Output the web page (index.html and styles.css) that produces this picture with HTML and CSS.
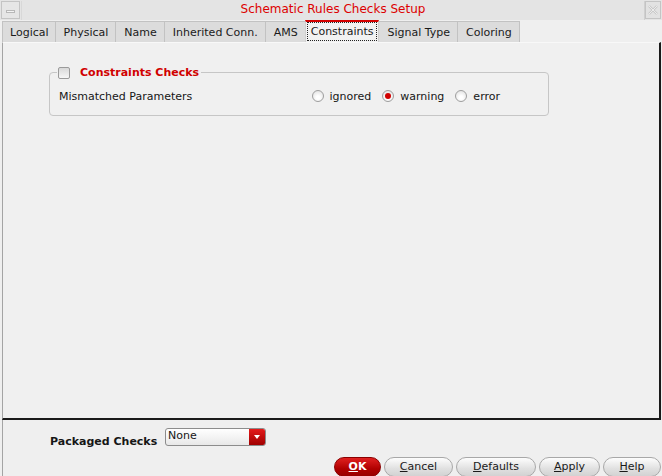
FILE: index.html
```html
<!DOCTYPE html>
<html>
<head>
<meta charset="utf-8">
<link rel="stylesheet" href="styles.css">
</head>
<body>
<div class="window">
  <div class="titlebar">
    <div class="tb-btn"><span class="dash"></span></div>
    <div class="title">Schematic Rules Checks Setup</div>
    <div class="tb-btn close">
      <svg width="12" height="12" viewBox="0 0 12 12"><path d="M2 2 L10 10 M10 2 L2 10" stroke="#c8c8c8" stroke-width="2.4" fill="none"/><path d="M2 2 L10 10 M10 2 L2 10" stroke="#f4f4f4" stroke-width="0.8" fill="none"/></svg>
    </div>
  </div>
  <div class="tabs">
    <div class="tab first">Logical</div>
    <div class="tab">Physical</div>
    <div class="tab">Name</div>
    <div class="tab">Inherited Conn.</div>
    <div class="tab">AMS</div>
    <div class="tab active"><span class="focus">Constraints</span></div>
    <div class="tab">Signal Type</div>
    <div class="tab">Coloring</div>
  </div>
  <div class="panel">
    <fieldset class="group">
      <legend class="legend"><span class="checkbox"></span><span class="legend-text">Constraints Checks</span></legend>
      <div class="row">
        <span class="label">Mismatched Parameters</span>
        <div class="radios">
          <span class="radio-item"><span class="radio"></span>ignored</span>
          <span class="radio-item"><span class="radio on"></span>warning</span>
          <span class="radio-item"><span class="radio"></span>error</span>
        </div>
      </div>
    </fieldset>
  </div>
  <div class="footer">
    <div class="packaged">
      <span class="pk-label">Packaged Checks</span>
      <div class="combo"><span class="combo-text">None</span><span class="combo-arrow"></span></div>
    </div>
    <div class="buttons">
      <button class="btn ok"><u>O</u>K</button>
      <button class="btn cancel"><u>C</u>ancel</button>
      <button class="btn defaults"><u>D</u>efaults</button>
      <button class="btn apply"><u>A</u>pply</button>
      <button class="btn help"><u>H</u>elp</button>
    </div>
  </div>
</div>
</body>
</html>
```

FILE: styles.css
```css
* { box-sizing: border-box; }
html, body {
  margin: 0;
  padding: 0;
  background: #efefef;
}
body {
  font-family: "DejaVu Sans", sans-serif;
  font-size: 11px;
  color: #161616;
}
.window {
  width: 662px;
  height: 476px;
  display: flex;
  flex-direction: column;
  background: #efefef;
}
.titlebar {
  height: 20px;
  display: flex;
  align-items: stretch;
  background: #e4e4e4;
  padding-top: 1px;
}
.tb-btn {
  width: 19px;
  height: 18px;
  border: 1px solid #c4c4c4;
  background: #e6e6e6;
  display: flex;
  align-items: center;
  justify-content: center;
  margin-left: 1px;
}
.tb-btn.close { margin-left: 0; margin-right: 1px; width: 16px; background: #e2e2e2; }
.dash {
  width: 9px;
  height: 3px;
  border: 1px solid #b8b8b8;
  background: #f4f4f4;
  margin-top: 2px;
}
.title {
  flex: 1;
  text-align: center;
  color: #dd0000;
  font-size: 12px;
  line-height: 17px;
  border-left: 1px solid #d8d8d8;
  border-right: 1px solid #d0d0d0;
  margin-left: 1px;
}
.tabs {
  display: flex;
  height: 22px;
  padding-left: 2px;
  align-items: flex-end;
  background: #efefef;
}
.tab {
  height: 21px;
  padding: 0 7px 0 8px;
  font-size: 11px;
  line-height: 21px;
  background: #dcdcdc;
  border: 1px solid #c2c2c2;
  border-bottom: none;
  margin-right: -1px;
  color: #1a1a1a;
}
.tab.first { padding: 0 6px 0 7px; }
.tab.active {
  height: 22px;
  background: #f2f2f2;
  border-top: 2px solid #d40000;
  padding: 0 1px;
  line-height: 19px;
  position: relative;
  z-index: 1;
  border-left: 1px solid #d0d0d0;
  border-right: 1px solid #d0d0d0;
}
.focus {
  display: inline-block;
  border: 1px dotted #222;
  padding: 0 3px;
  line-height: 17px;
}
.panel {
  flex: 1;
  border-left: 1px solid #a4a4a4;
  border-right: 2px solid #1a1a1a;
  border-bottom: 2px solid #1a1a1a;
  border-top: 1px solid #f8f8f8;
  margin-left: 2px;
  margin-right: 1px;
  padding: 23px 110px 0 46px;
  background: #f0f0f0;
}
.group {
  margin: 0;
  border: 1px solid #c6c6c6;
  border-radius: 4px;
  padding: 8px 10px 8px 7px;
  height: 50px;
}
.legend {
  padding: 0 2px 0 1px;
  margin-left: 0;
  display: flex;
  align-items: center;
  gap: 10px;
}
.checkbox {
  width: 12px;
  height: 12px;
  border: 1px solid #9a9a9a;
  border-radius: 2px;
  background: linear-gradient(#d8d8d8, #f6f6f6);
}
.legend-text {
  color: #d00000;
  font-weight: bold;
  font-size: 11px;
}
.row {
  display: flex;
  align-items: center;
  justify-content: space-between;
  height: 18px;
  padding-left: 2px;
}
.label { font-size: 11px; }
.radios {
  display: flex;
  gap: 11px;
  margin-right: 38px;
}
.radio-item {
  display: flex;
  align-items: center;
  gap: 6px;
  font-size: 11px;
}
.radio {
  width: 12px;
  height: 12px;
  border-radius: 50%;
  border: 1px solid #9e9e9e;
  background: radial-gradient(circle at 50% 65%, #ffffff 20%, #dcdcdc 100%);
  display: inline-flex;
  align-items: center;
  justify-content: center;
}
.radio.on::after {
  content: "";
  width: 6px;
  height: 6px;
  border-radius: 50%;
  background: #d00000;
}
.footer {
  height: 56px;
  border-left: 1px solid #a4a4a4;
  margin-left: 2px;
  display: flex;
  flex-direction: column;
}
.packaged {
  display: flex;
  align-items: flex-start;
  padding-left: 47px;
  margin-top: 8px;
  height: 19px;
}
.pk-label {
  font-weight: bold;
  font-size: 11px;
  width: 115px;
  padding-top: 7px;
}
.combo {
  width: 101px;
  height: 18px;
  border: 1px solid #8c8c8c;
  border-radius: 3px;
  display: flex;
  background: linear-gradient(#ffffff, #e8e8e8);
  overflow: hidden;
}
.combo-text {
  flex: 1;
  padding-left: 2px;
  line-height: 14px;
  font-size: 11px;
}
.combo-arrow {
  width: 16px;
  background: linear-gradient(#e41a1a, #a00000);
  position: relative;
}
.combo-arrow::after {
  content: "";
  position: absolute;
  left: 5px;
  top: 6px;
  border-left: 3px solid transparent;
  border-right: 3px solid transparent;
  border-top: 4px solid #ffffff;
}
.buttons {
  display: flex;
  justify-content: flex-end;
  gap: 3px;
  margin-top: 10px;
  padding-right: 1px;
}
.btn {
  font-family: "DejaVu Sans", sans-serif;
  font-size: 11px;
  height: 20px;
  border-radius: 10px;
  border: 1px solid #a8a8a8;
  background: linear-gradient(#fdfdfd, #e0e0e0 60%, #d2d2d2);
  color: #1a1a1a;
  padding: 0;
  line-height: 18px;
}
.btn u { text-decoration: underline; }
.btn.ok {
  width: 47px;
  background: linear-gradient(#e02020, #b00000 60%, #980000);
  border-color: #8a0000;
  color: #fff;
  font-weight: bold;
}
.btn.cancel { width: 69px; }
.btn.defaults { width: 80px; }
.btn.apply { width: 61px; }
.btn.help { width: 58px; }
```
